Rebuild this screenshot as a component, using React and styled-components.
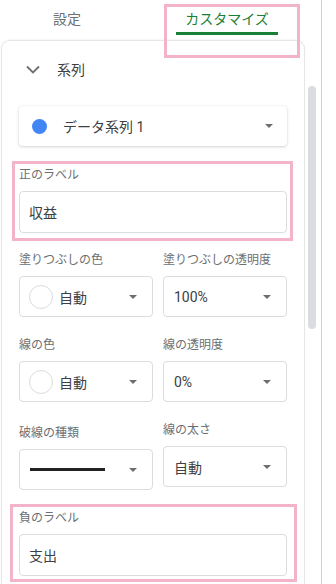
import React from "react";
import styled, { createGlobalStyle } from "styled-components";

const GlobalStyle = createGlobalStyle`
	html, body {
		margin: 0;
		padding: 0;
		background: #fff;
	}
	* {
		box-sizing: border-box;
	}
`;

const colors = {
	text: "#3c4043",
	muted: "#6b6f73",
	line: "#dadce0",
	green: "#188038",
	pink: "#f3b3ca",
	blue: "#4285f4",
};

const Frame = styled.div`
	width: 336px;
	height: 584px;
	overflow: hidden;
	background: #fff;
	font-family: Roboto, "Noto Sans CJK JP", sans-serif;
	color: ${colors.text};
`;

const Sidebar = styled.div`
	width: 322px;
	height: 100%;
	border-right: 1px solid #cfcfcf;
	display: flex;
	flex-direction: column;
`;

const Tabs = styled.div`
	display: flex;
	align-items: flex-start;
	height: 40px;
	flex-shrink: 0;
`;

const Tab = styled.div`
	position: relative;
	width: ${(p) => p.$width}px;
	margin-left: ${(p) => p.$offset || 0}px;
	height: 35px;
	padding-top: 9px;
	line-height: 20px;
	font-size: 14px;
	text-align: center;
	color: ${(p) => (p.$active ? colors.green : colors.muted)};
	border-bottom: 3px solid ${(p) => (p.$active ? colors.green : "transparent")};

	${(p) =>
		p.$active &&
		`
		&::after {
			content: "";
			position: absolute;
			left: -12px;
			top: 4px;
			width: 130px;
			height: 48px;
			border: 3px solid ${colors.pink};
		}
	`}
`;

const Body = styled.div`
	flex: 1;
	display: flex;
	min-height: 0;
`;

const Card = styled.div`
	margin-left: 1px;
	width: 304px;
	flex-shrink: 0;
	border: 1px solid #e6e6e6;
	border-bottom: none;
	border-radius: 9px 9px 0 0;
	box-shadow: 0 -1px 2px rgba(0, 0, 0, 0.04);
	padding: 16px 17px 0 17px;
	display: flex;
	flex-direction: column;
`;

const ScrollTrack = styled.div`
	flex: 1;
	padding: 46px 0 0 3px;
`;

const Thumb = styled.div`
	width: 8px;
	height: 243px;
	border-radius: 4px;
	background: ${colors.line};
`;

const SectionHeader = styled.div`
	display: flex;
	align-items: center;
	height: 24px;
	padding-left: 7px;
	font-size: 14px;
	color: ${colors.text};
	gap: 17px;
`;

const Arrow = styled.span`
	width: 0;
	height: 0;
	flex-shrink: 0;
	border-left: 4px solid transparent;
	border-right: 4px solid transparent;
	border-top: 4px solid ${colors.muted};
`;

const SeriesSelect = styled.div`
	margin-top: 25px;
	height: 40px;
	display: flex;
	align-items: center;
	padding: 0 14px 0 13px;
	border-radius: 4px;
	background: #fff;
	box-shadow: 0 1px 3px rgba(60, 64, 67, 0.22), 0 0 1px rgba(60, 64, 67, 0.12);
	font-size: 14px;
`;

const Dot = styled.span`
	width: 15px;
	height: 15px;
	border-radius: 50%;
	background: ${colors.blue};
	flex-shrink: 0;
	margin-right: 16px;
`;

const Grow = styled.span`
	flex: 1;
	white-space: nowrap;
`;

const Highlight = styled.div`
	border: 3px solid ${colors.pink};
	margin: ${(p) => p.$gap - p.$t}px ${(p) => -p.$r}px ${(p) => -p.$b}px
		${(p) => -p.$l}px;
	padding: ${(p) => p.$t - 3}px ${(p) => p.$r - 3}px ${(p) => p.$b - 3}px
		${(p) => p.$l - 3}px;
`;

const Label = styled.div`
	font-size: 12px;
	line-height: 16px;
	color: ${colors.muted};
	margin-bottom: 8px;
	white-space: nowrap;
`;

const TextInput = styled.div`
	height: 42px;
	display: flex;
	align-items: center;
	padding-left: 9px;
	border: 1px solid ${colors.line};
	border-radius: 4px;
	font-size: 14px;
`;

const Grid = styled.div`
	margin-top: 19px;
	display: grid;
	grid-template-columns: 134px 124px;
	column-gap: 10px;
	row-gap: 20px;
	align-items: start;
`;

const Cell = styled.div`
	margin-top: ${(p) => p.$shift || 0}px;
`;

const Select = styled.div`
	height: 41px;
	display: flex;
	align-items: center;
	padding: 0 15px 0 ${(p) => (p.$swatch ? 9 : 10)}px;
	border: 1px solid ${colors.line};
	border-radius: 4px;
	font-size: 14px;
`;

const Swatch = styled.span`
	width: 24px;
	height: 24px;
	border-radius: 50%;
	border: 1px solid ${colors.line};
	flex-shrink: 0;
	margin-right: 6px;
`;

const DashLine = styled.span`
	width: 75px;
	height: 3px;
	background: #222;
	margin-right: auto;
`;

const Chevron = () => (
	<svg width="14" height="9" viewBox="0 0 14 9">
		<polyline
			points="1,1.5 7,7.5 13,1.5"
			fill="none"
			stroke={colors.muted}
			strokeWidth="1.8"
		/>
	</svg>
);

const ColorSelect = ({ value }) => (
	<Select $swatch>
		<Swatch />
		<Grow>{value}</Grow>
		<Arrow />
	</Select>
);

const ValueSelect = ({ value }) => (
	<Select>
		<Grow>{value}</Grow>
		<Arrow />
	</Select>
);

const App = () => {
	return (
		<Frame>
			<GlobalStyle />
			<Sidebar>
				<Tabs>
					<Tab $width={134}>設定</Tab>
					<Tab $width={102} $offset={42} $active>
						カスタマイズ
					</Tab>
				</Tabs>
				<Body>
					<Card>
						<SectionHeader>
							<Chevron />
							系列
						</SectionHeader>
						<SeriesSelect>
							<Dot />
							<Grow>データ系列 1</Grow>
							<Arrow />
						</SeriesSelect>

						<Highlight $gap={21} $t={6} $r={6} $b={8} $l={7}>
							<Label>正のラベル</Label>
							<TextInput>収益</TextInput>
						</Highlight>

						<Grid>
							<Cell>
								<Label>塗りつぶしの色</Label>
								<ColorSelect value="自動" />
							</Cell>
							<Cell>
								<Label>塗りつぶしの透明度</Label>
								<ValueSelect value="100%" />
							</Cell>
							<Cell>
								<Label>線の色</Label>
								<ColorSelect value="自動" />
							</Cell>
							<Cell>
								<Label>線の透明度</Label>
								<ValueSelect value="0%" />
							</Cell>
							<Cell $shift={3}>
								<Label>破線の種類</Label>
								<Select>
									<DashLine />
									<Arrow />
								</Select>
							</Cell>
							<Cell>
								<Label>線の太さ</Label>
								<ValueSelect value="自動" />
							</Cell>
						</Grid>

						<Highlight $gap={20} $t={6} $r={10} $b={6} $l={9}>
							<Label>負のラベル</Label>
							<TextInput>支出</TextInput>
						</Highlight>
					</Card>
					<ScrollTrack>
						<Thumb />
					</ScrollTrack>
				</Body>
			</Sidebar>
		</Frame>
	);
};

export default App;
